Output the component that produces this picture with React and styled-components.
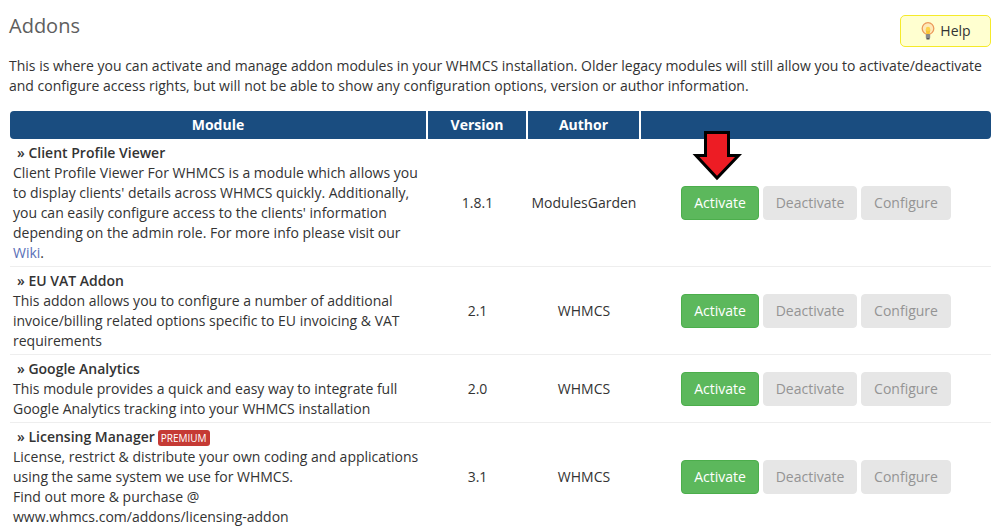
import React from "react";
import styled, { createGlobalStyle } from "styled-components";

const Global = createGlobalStyle`
  html, body { margin: 0; padding: 0; background: #fff; overflow: hidden; }
  body { font-family: "Open Sans", sans-serif; font-size: 14px; line-height: 20px; color: #333; }
`;

const Page = styled.div`
  position: relative;
  width: 1005px;
  height: 528px;
  overflow: hidden;
  padding: 14px 10px 0 9px;
  box-sizing: border-box;
`;
const TitleRow = styled.div`
  display: flex;
  justify-content: space-between;
  align-items: flex-start;
  height: 42px;
`;
const Title = styled.h1`
  margin: 0;
  font-size: 20px;
  font-weight: 400;
  line-height: 24px;
  color: #5e5e5e;
`;
const HelpButton = styled.div`
  display: flex;
  align-items: center;
  justify-content: center;
  gap: 4px;
  box-sizing: border-box;
  width: 91px;
  height: 32px;
  margin: 1px 4px 0 0;
  background: #ffffd0;
  border: 1px solid #f5ea2a;
  border-radius: 5px;
  color: #333;
`;
const Intro = styled.p`
  margin: 0 0 15px;
  width: 990px;
  color: #333;
`;
const Table = styled.div`
  margin-left: 1px;
  width: 981px;
`;
const HeadRow = styled.div`
  display: grid;
  grid-template-columns: 416px 98px 111px 350px;
  column-gap: 2px;
  height: 28px;
`;
const HeadCell = styled.div`
  background: #1a4d80;
  color: #fff;
  font-weight: 700;
  text-align: center;
  line-height: 28px;
  border-radius: ${(p) => p.$radius || "0"};
`;
const Row = styled.div`
  display: grid;
  grid-template-columns: 416px 100px 113px 352px;
  box-sizing: border-box;
  height: ${(p) => p.$h}px;
  border-bottom: ${(p) => (p.$last ? "none" : "1px solid #eeeeee")};
`;
const Info = styled.div`
  padding: 4px 0 0 3px;
  width: 412px;
  white-space: nowrap;
`;
const Name = styled.div`
  font-weight: 600;
  padding-left: 4px;
  color: #333;
  display: flex;
  align-items: center;
`;
const Premium = styled.span`
  display: inline-block;
  background: #c53a34;
  color: #fff;
  font-size: 10px;
  font-weight: 400;
  line-height: 16px;
  height: 16px;
  padding: 0 3px;
  margin: 2px 0 0 3px;
  border-radius: 3px;
`;
const Center = styled.div`
  display: flex;
  align-items: center;
  justify-content: center;
  padding-left: 3px;
`;
const Actions = styled.div`
  display: flex;
  align-items: center;
  gap: 4px;
  padding-left: 42px;
`;
const Btn = styled.div`
  box-sizing: border-box;
  height: 34px;
  width: ${(p) => p.$w}px;
  text-align: center;
  border-radius: 4px;
  background: ${(p) => (p.$on ? "#5cb85c" : "#e6e6e6")};
  color: ${(p) => (p.$on ? "#fff" : "#949494")};
  border: 1px solid ${(p) => (p.$on ? "#4cae4c" : "#e6e6e6")};
  line-height: 32px;
`;
const WikiLink = styled.span`
  color: #5a6fb8;
`;
const Arrow = styled.svg`
  position: absolute;
  left: 692px;
  top: 130px;
`;

const Bulb = () => (
  <svg width="16" height="18" viewBox="0 0 16 18">
    <circle cx="8" cy="6.5" r="5.8" fill="#fde9b8" stroke="#ec9a5c" strokeWidth="1.3" />
    <path d="M5.6 7.5 L10.4 7.500 L9.6 12 L6.4 12 Z" fill="#fbc531" />
    <circle cx="8" cy="7" r="2.200" fill="#fcd34d" />
    <rect x="5.8" y="12" width="4.4" height="4.5" rx="1" fill="#8a8a8a" />
    <rect x="6.5" y="16" width="3" height="1.5" fill="#555" />
  </svg>
);

const Buttons = () => (
  <Actions>
    <Btn $on $w={78}>Activate</Btn>
    <Btn $w={94}>Deactivate</Btn>
    <Btn $w={90}>Configure</Btn>
  </Actions>
);

const rows = [
  {
    h: 128,
    name: "» Client Profile Viewer",
    lines: [
      "Client Profile Viewer For WHMCS is a module which allows you",
      "to display clients' details across WHMCS quickly. Additionally,",
      "you can easily configure access to the clients' information",
      "depending on the admin role. For more info please visit our",
      <><WikiLink>Wiki</WikiLink>.</>,
    ],
    version: "1.8.1",
    author: "ModulesGarden",
  },
  {
    h: 88,
    name: "» EU VAT Addon",
    lines: [
      "This addon allows you to configure a number of additional",
      "invoice/billing related options specific to EU invoicing & VAT",
      "requirements",
    ],
    version: "2.1",
    author: "WHMCS",
  },
  {
    h: 68,
    name: "» Google Analytics",
    lines: [
      "This module provides a quick and easy way to integrate full",
      "Google Analytics tracking into your WHMCS installation",
    ],
    version: "2.0",
    author: "WHMCS",
  },
  {
    h: 108,
    last: true,
    premium: true,
    name: "» Licensing Manager",
    lines: [
      "License, restrict & distribute your own coding and applications",
      "using the same system we use for WHMCS.",
      "Find out more & purchase @",
      "www.whmcs.com/addons/licensing-addon",
    ],
    version: "3.1",
    author: "WHMCS",
  },
];

export default function App() {
  return (
    <Page>
      <Global />
      <TitleRow>
        <Title>Addons</Title>
        <HelpButton><Bulb />Help</HelpButton>
      </TitleRow>
      <Intro>
        This is where you can activate and manage addon modules in your WHMCS installation. Older legacy modules will still allow you to activate/deactivate and configure access rights, but will not be able to show any configuration options, version or author information.
      </Intro>
      <Table>
        <HeadRow>
          <HeadCell $radius="4px 0 0 4px">Module</HeadCell>
          <HeadCell>Version</HeadCell>
          <HeadCell>Author</HeadCell>
          <HeadCell $radius="0 4px 4px 0" />
        </HeadRow>
        {rows.map((r) => (
          <Row key={r.name} $h={r.h} $last={r.last}>
            <Info>
              <Name>{r.name}{r.premium && <Premium>PREMIUM</Premium>}</Name>
              {r.lines.map((l, i) => <div key={i}>{l}</div>)}
            </Info>
            <Center>{r.version}</Center>
            <Center>{r.author}</Center>
            <Buttons />
          </Row>
        ))}
      </Table>
      <Arrow width="52" height="52" viewBox="0 0 52 52">
        <path d="M13.500 2.500 H36.500 V25.500 H46.500 L25 48 L4 25.500 H13.500 Z" fill="#ed1c24" stroke="#000" strokeWidth="3" strokeMiterlimit="10" />
      </Arrow>
    </Page>
  );
}
